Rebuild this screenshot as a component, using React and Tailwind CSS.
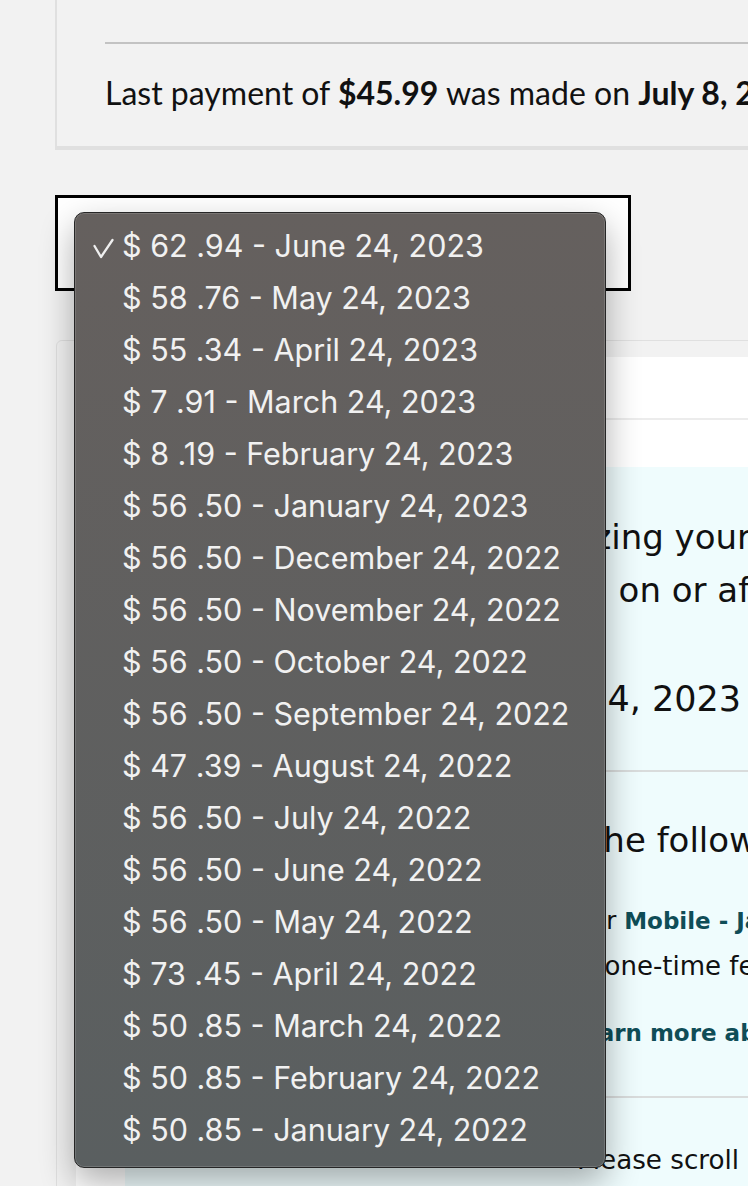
const statements = [
  "$ 62 .94 - June 24, 2023",
  "$ 58 .76 - May 24, 2023",
  "$ 55 .34 - April 24, 2023",
  "$ 7 .91 - March 24, 2023",
  "$ 8 .19 - February 24, 2023",
  "$ 56 .50 - January 24, 2023",
  "$ 56 .50 - December 24, 2022",
  "$ 56 .50 - November 24, 2022",
  "$ 56 .50 - October 24, 2022",
  "$ 56 .50 - September 24, 2022",
  "$ 47 .39 - August 24, 2022",
  "$ 56 .50 - July 24, 2022",
  "$ 56 .50 - June 24, 2022",
  "$ 56 .50 - May 24, 2022",
  "$ 73 .45 - April 24, 2022",
  "$ 50 .85 - March 24, 2022",
  "$ 50 .85 - February 24, 2022",
  "$ 50 .85 - January 24, 2022",
];

const CheckMark = () => (
  <svg
    width="22"
    height="22"
    viewBox="0 0 22 22"
    className="absolute left-[18px] top-[18px]"
    fill="none"
  >
    <polyline
      points="1.5,8 8,19 19.5,2"
      stroke="#efefef"
      strokeWidth="2.3"
      strokeLinecap="round"
      strokeLinejoin="round"
    />
  </svg>
);

const StatementMenu = ({ selected = 0 }) => (
  <div className="absolute left-[74px] top-[212px] w-[532px] rounded-[10px] border border-[#262626] bg-linear-to-b from-[#65605e] to-[#5a5f60] pt-[7px] pb-[11px] shadow-[inset_0_0_0_1px_rgba(255,255,255,0.14),0_14px_34px_rgba(0,0,0,0.32)]">
    {statements.map((s, i) => (
      <div
        key={s}
        className="relative flex h-[52px] items-center pl-[47px] text-[30.5px] text-[#f1f1f1] whitespace-nowrap [font-family:Inter,'Liberation_Sans',sans-serif]"
      >
        {i === selected && <CheckMark />}
        {s}
      </div>
    ))}
  </div>
);

export default function App() {
  return (
    <div className="relative h-[1186px] w-[748px] overflow-hidden bg-[#f2f2f2] text-[#111]">
      {/* last payment card (top is scrolled off) */}
      <div className="ml-[55px] h-[150px] w-[760px] border-b-4 border-l-2 border-[#e0e0e0] pl-[48px] pt-[42px]">
        <div className="h-[2px] bg-[#c3c3c3]" />
        <p className="mt-[31px] whitespace-nowrap text-[32px] leading-[36px] [font-family:Lato,sans-serif]">
          Last payment of <b>$45.99</b> was made on <b>July 8, 2023</b>
        </p>
      </div>

      {/* statement select */}
      <div className="ml-[55px] mt-[45px] h-[96px] w-[576px] border-[3px] border-black bg-white" />

      {/* account card */}
      <div className="ml-[56px] mt-[49px] w-[760px] rounded-tl-[6px] border border-[#e0e0e0] bg-[#f2f2f2] pl-[19px] pt-[16px]">
        <div className="bg-white">
          <div className="h-[63px] border-b-2 border-[#ececec]" />
          <div className="h-[47px]" />
          <div className="ml-[49px] h-[740px] bg-[#effcfd] pl-[24px] pt-[44px] whitespace-nowrap [font-family:'DejaVu_Sans',sans-serif]">
            <p className="text-[34px] leading-[53px]">
              Thank you we&apos;re still finalizing your
              <br />
              Your mobile line will cancel on or after
            </p>
            <p className="mt-[56px] text-[35px] leading-[53px]">
              Your bill date will be July 24, 2023
            </p>
            <div className="mt-[44px] h-[2px] bg-[#d9dcdc]" />
            <p className="mt-[42px] text-[34px] leading-[53px]">
              Before you go please see the following
            </p>
            <p className="mt-[31px] text-[24.5px] leading-[45px]">
              A device balance still remains on your{" "}
              <span className="text-[23px] font-bold text-[#0f4d57]">
                Mobile - Jane
              </span>
            </p>
            <p className="text-[26px] leading-[45px]">
              Your full balance will be billed as a one-time fee.
            </p>
            <p className="mt-[22px] text-[23px] font-bold leading-[45px] text-[#0f4d57]">
              Have questions about your bill? Learn more about final bills
            </p>
            <div className="mt-[40px] h-[2px] bg-[#d9dcdc]" />
            <p className="mt-[36px] pl-[428px] text-[26.2px] leading-[53px]">
              Please scroll down for more details
            </p>
          </div>
        </div>
      </div>

      <StatementMenu selected={0} />
    </div>
  );
}
